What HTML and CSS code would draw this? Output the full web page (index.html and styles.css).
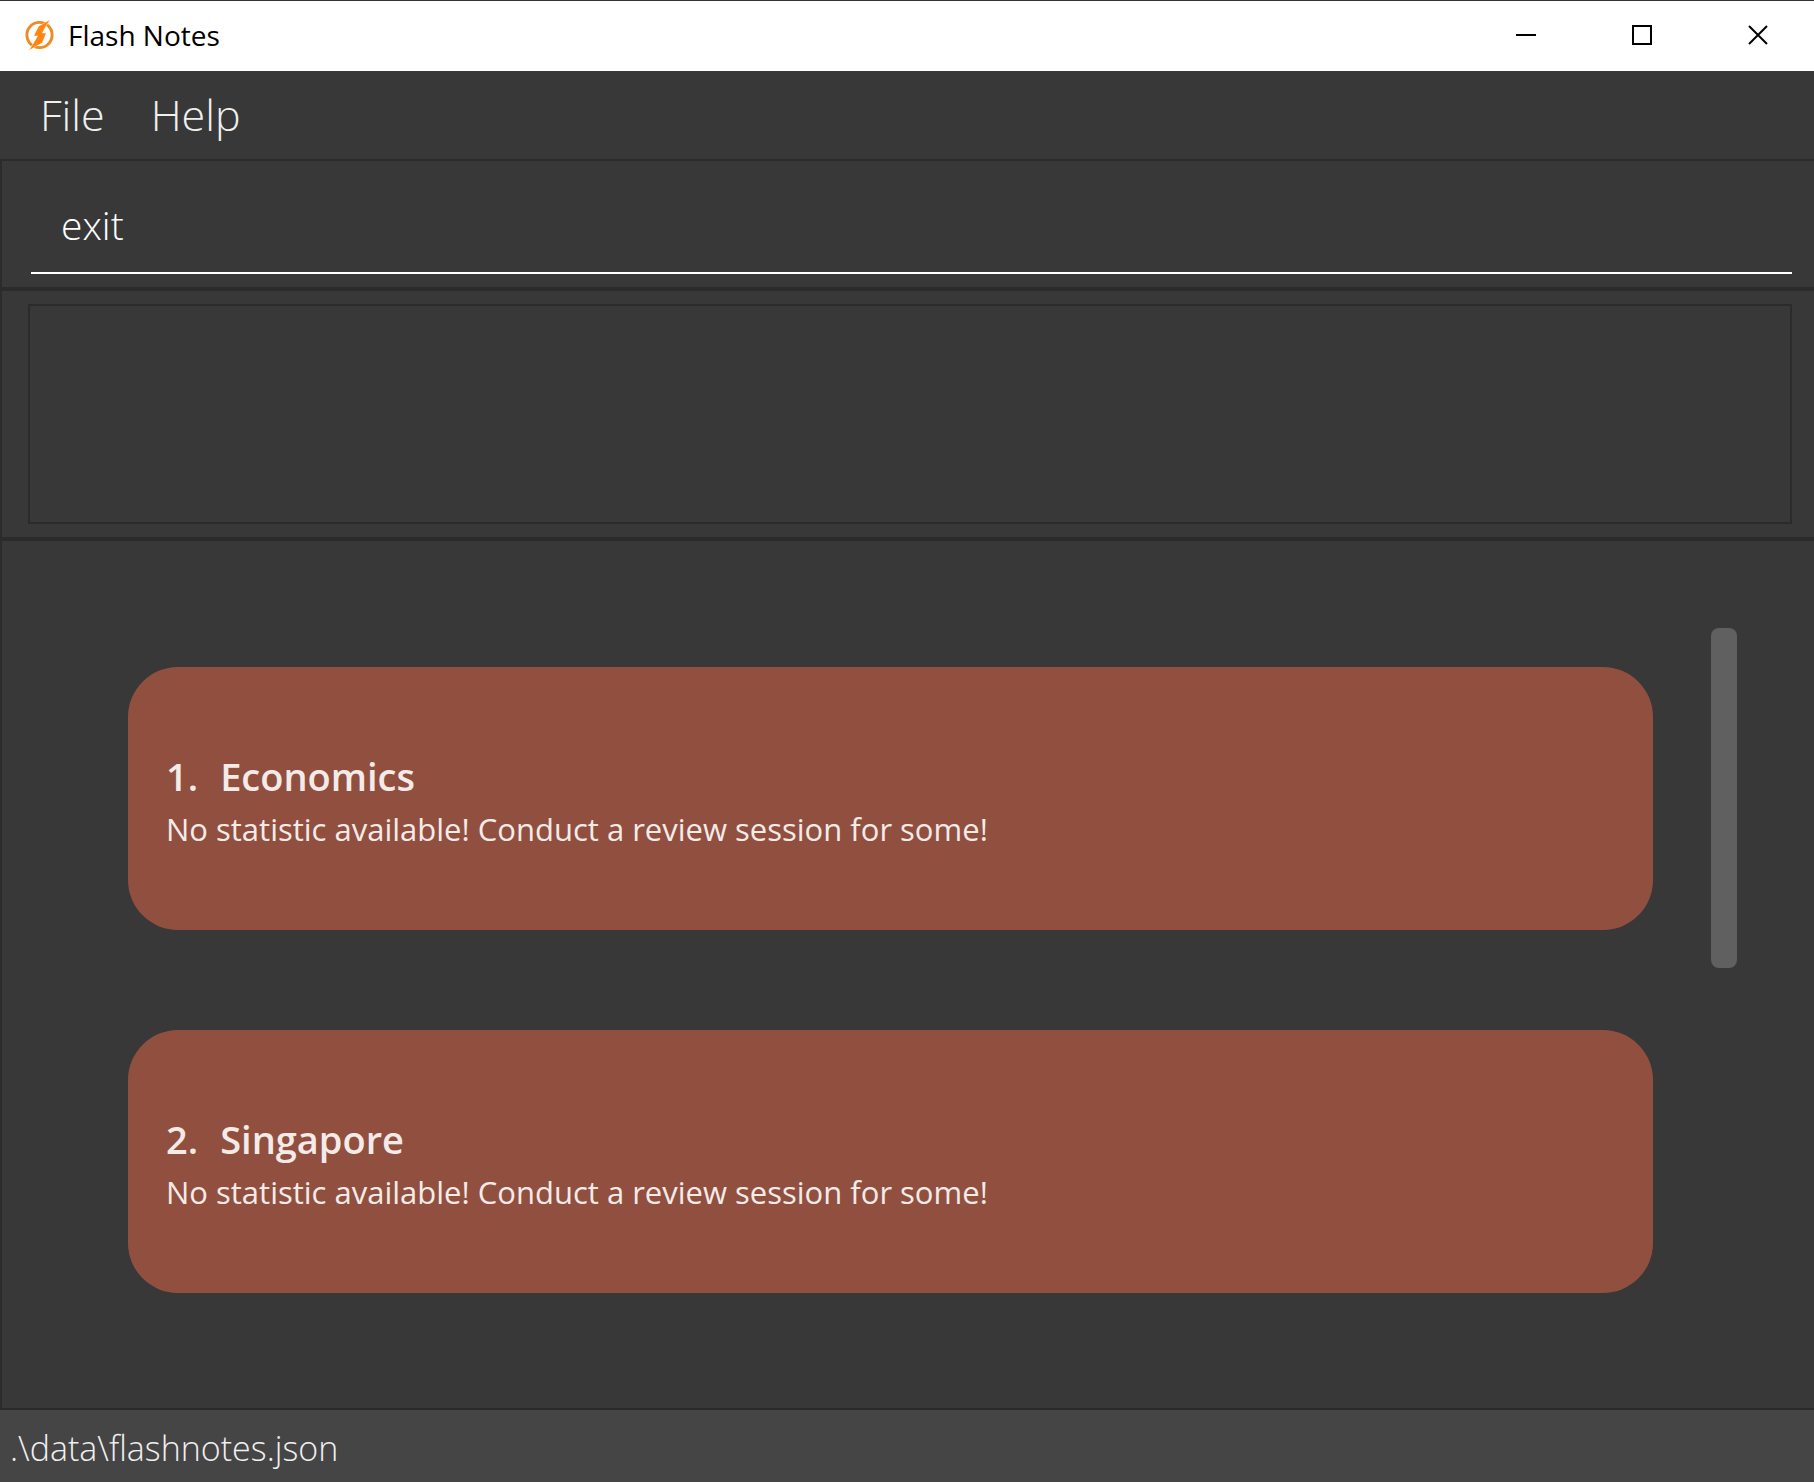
FILE: index.html
```html
<!DOCTYPE html>
<html lang="en">
<head>
<meta charset="utf-8">
<title>Flash Notes</title>
<link rel="stylesheet" href="styles.css">
</head>
<body>
<div class="window">
  <header class="titlebar">
    <svg class="logo" viewBox="0 0 32 34" aria-hidden="true">
      <circle cx="16" cy="17" r="13" fill="none" stroke="#f08a24" stroke-width="3"/>
      <path d="M27 1L15 8L10 18L14 18L10 25L5 33L19 25L23 15L19 15L22 9Z" fill="#ff8410" stroke="#fff" stroke-width="1" stroke-opacity="0.5"/>
    </svg>
    <h1 class="app-name">Flash Notes</h1>
    <div class="window-controls">
      <button class="window-button" type="button" aria-label="Minimize">
        <svg width="20" height="20" viewBox="0 0 20 20"><path d="M0 10H20" stroke="#000" stroke-width="2"/></svg>
      </button>
      <button class="window-button" type="button" aria-label="Maximize">
        <svg width="20" height="20" viewBox="0 0 20 20"><path d="M1 1H19V19H1Z" fill="none" stroke="#000" stroke-width="2"/></svg>
      </button>
      <button class="window-button" type="button" aria-label="Close">
        <svg width="20" height="20" viewBox="0 0 20 20"><path d="M1 1L19 19M19 1L1 19" stroke="#000" stroke-width="2"/></svg>
      </button>
    </div>
  </header>
  <nav class="menubar">
    <button class="menu" type="button">File</button>
    <button class="menu" type="button">Help</button>
  </nav>
  <main class="content">
    <form class="command-panel">
      <input class="command" type="text" value="exit" aria-label="Command">
    </form>
    <section class="result-panel">
      <output class="result" aria-label="Result"></output>
    </section>
    <section class="list-panel">
      <ol class="decks">
        <li class="deck">
          <h2 class="deck-title"><span>1.</span><span>Economics</span></h2>
          <p class="deck-stats">No statistic available! Conduct a review session for some!</p>
        </li>
        <li class="deck">
          <h2 class="deck-title"><span>2.</span><span>Singapore</span></h2>
          <p class="deck-stats">No statistic available! Conduct a review session for some!</p>
        </li>
      </ol>
      <div class="scroll-track"><div class="scroll-thumb"></div></div>
    </section>
  </main>
  <footer class="statusbar">.\data\flashnotes.json</footer>
</div>
</body>
</html>
```
FILE: styles.css
```css
* {
  box-sizing: border-box;
}

body {
  margin: 0;
  background: #383838;
  color: #f4ebe9;
  font-family: "Open Sans", "Noto Sans", sans-serif;
}

h1, h2, p, ol {
  margin: 0;
  padding: 0;
}

button {
  border: 0;
  padding: 0;
  background: none;
  color: inherit;
  font: inherit;
}

.window {
  display: flex;
  flex-direction: column;
  min-height: 100vh;
}

.titlebar {
  display: flex;
  align-items: center;
  height: 71px;
  padding: 0 1px 2px 24px;
  border-top: 1px solid #333;
  background: #fff;
  color: #000;
}

.logo {
  width: 31px;
  height: 34px;
}

.app-name {
  margin-left: 13px;
  font-size: 28px;
  font-weight: 400;
  line-height: 38px;
}

.window-controls {
  display: flex;
  gap: 6px;
  margin-left: auto;
}

.window-button {
  display: flex;
  align-items: center;
  justify-content: center;
  width: 110px;
  height: 68px;
}

.menubar {
  display: flex;
  gap: 46px;
  height: 88px;
  padding: 0 40px 2px;
  color: #f0f0f0;
  font-size: 43px;
  font-weight: 300;
}

.content {
  display: flex;
  flex: 1;
  flex-direction: column;
  border-left: 2px solid #2b2b2b;
}

.command-panel {
  height: 128px;
  padding: 16px 22px 13px 29px;
  border-top: 2px solid #2b2b2b;
}

.command {
  width: 100%;
  height: 100%;
  padding: 0 30px;
  border: 0;
  border-bottom: 2px solid #fff;
  outline: 0;
  background: none;
  color: #fff;
  font: 300 39px "Open Sans", "Noto Sans", sans-serif;
}

.result-panel {
  padding: 13px 22px 13px 26px;
  border-top: 4px solid #2b2b2b;
  border-bottom: 4px solid #2b2b2b;
}

.result {
  display: block;
  height: 220px;
  border: 2px solid #2b2b2b;
}

.list-panel {
  display: flex;
  flex: 1;
  gap: 58px;
  padding: 87px 77px 86px 126px;
  border-bottom: 2px solid #2b2b2b;
}

.decks {
  display: flex;
  flex: 1;
  flex-direction: column;
  gap: 100px;
  padding-top: 39px;
  list-style: none;
}

.deck {
  display: flex;
  flex-direction: column;
  justify-content: center;
  height: 263px;
  padding: 4px 38px 0;
  border-radius: 50px;
  background: #91503f;
}

.deck-title {
  display: flex;
  gap: 22px;
  font-size: 38px;
  font-weight: 600;
  line-height: 56px;
}

.deck-stats {
  font-size: 31px;
  line-height: 50px;
}

.scroll-track {
  width: 26px;
}

.scroll-thumb {
  height: 340px;
  border-radius: 8px;
  background: #606060;
}

.statusbar {
  height: 72px;
  padding: 0 10px;
  background: #454545;
  color: #f0f0f0;
  font-size: 34px;
  font-weight: 300;
  line-height: 76px;
}
```
